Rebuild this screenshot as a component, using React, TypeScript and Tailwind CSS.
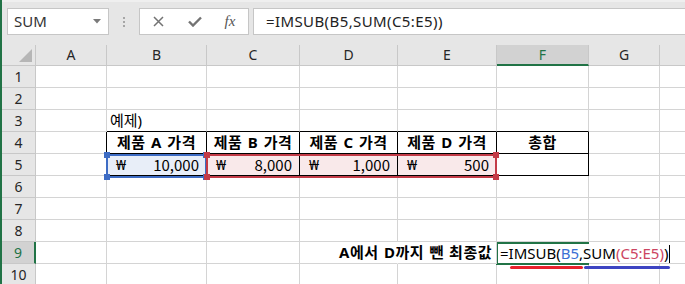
import React from "react";

const COLS = ["A", "B", "C", "D", "E", "F", "G", ""];
const ROWS = [1, 2, 3, 4, 5, 6, 7, 8, 9, 10];

const blackRight = new Set(["A4", "A5", "B4", "C4", "D4", "E4", "F4", "B5", "C5", "D5", "E5", "F5"]);
const blackBottom = new Set(["B3", "C3", "D3", "E3", "F3", "B4", "C4", "D4", "E4", "F4", "B5", "C5", "D5", "E5", "F5"]);

const headers: Record<string, string> = {
  B4: "제품 A 가격",
  C4: "제품 B 가격",
  D4: "제품 C 가격",
  E4: "제품 D 가격",
  F4: "총합",
};

const prices: Record<string, string> = {
  B5: "10,000",
  C5: "8,000",
  D5: "1,000",
  E5: "500",
};

function CellBody({ id }: { id: string }) {
  if (id === "B3") return <span className="pl-[3px]">예제)</span>;
  if (headers[id])
    return (
      <span className="w-full text-center font-bold tracking-[0.5px] [word-spacing:1px]">
        {headers[id]}
      </span>
    );
  if (prices[id])
    return (
      <span className="w-full flex justify-between pl-[9px] pr-[7px]">
        <span>₩</span>
        <span className="font-['Noto_Sans_CJK_KR',sans-serif]">{prices[id]}</span>
      </span>
    );
  if (id === "E9")
    return (
      <span className="w-full flex justify-end pr-[4px] font-bold tracking-[0.5px] [word-spacing:1px]">
        <span className="shrink-0">A에서 D까지 뺀 최종값</span>
      </span>
    );
  return null;
}

function Cell({ col, row }: { col: string; row: number }) {
  const id = `${col}${row}`;
  const r = blackRight.has(id)
    ? "border-r-black"
    : id === "D9"
    ? "border-r-white"
    : "border-r-[#d4d4d4]";
  const b = blackBottom.has(id) ? "border-b-black" : "border-b-[#d4d4d4]";
  const bg = id === "B5" ? "bg-[#e8eef8]" : prices[id] ? "bg-[#f9e9ea]" : "bg-white";
  const z = id === "E9" ? "relative z-10 bg-transparent" : "";
  return (
    <div className={`border-r border-b ${r} ${b} ${bg} ${z} flex items-center whitespace-nowrap text-[15px] leading-none text-black`}>
      <CellBody id={id} />
    </div>
  );
}

function Handles({ color }: { color: string }) {
  return (
    <>
      <span className={`absolute -left-[4px] -top-[4px] w-[6px] h-[6px] ${color}`} />
      <span className={`absolute -right-[4px] -top-[4px] w-[6px] h-[6px] ${color}`} />
      <span className={`absolute -left-[4px] -bottom-[4px] w-[6px] h-[6px] ${color}`} />
      <span className={`absolute -right-[4px] -bottom-[4px] w-[6px] h-[6px] ${color}`} />
    </>
  );
}

function Toolbar() {
  return (
    <div className="h-[45px] flex items-start pt-[8px] pl-[5px] border-t-2 border-t-[#efefef]">
      <div className="w-[102px] h-[27px] mt-[-2px] bg-white border border-[#c6c6c6] flex items-center justify-between pl-[6px] pr-[7px]">
        <span className="text-[15px] leading-none text-[#333]">SUM</span>
        <svg width="8" height="5" viewBox="0 0 8 5">
          <path d="M0 0 H8 L4 4.5 Z" fill="#7a7a7a" />
        </svg>
      </div>
      <div className="w-[30px] h-[27px] mt-[-2px] flex flex-col items-center justify-center gap-[2px]">
        <span className="w-[2px] h-[2px] bg-[#a6a6a6]" />
        <span className="w-[2px] h-[2px] bg-[#a6a6a6]" />
        <span className="w-[2px] h-[2px] bg-[#a6a6a6]" />
      </div>
      <div className="w-[110px] h-[27px] mt-[-2px] bg-white border border-[#c6c6c6] flex items-center">
        <div className="w-[37px] flex justify-center">
          <svg width="11" height="11" viewBox="0 0 11 11">
            <path d="M1 1 L10 10 M10 1 L1 10" stroke="#737373" strokeWidth="1.5" />
          </svg>
        </div>
        <div className="w-[35px] flex justify-center">
          <svg width="14" height="11" viewBox="0 0 14 11">
            <path d="M1 5.5 L5 9.5 L13 1.5" stroke="#737373" strokeWidth="2.4" fill="none" />
          </svg>
        </div>
        <div className="w-[36px] flex justify-center">
          <span className="font-['Liberation_Serif',serif] italic text-[15px] leading-none text-[#555]">fx</span>
        </div>
      </div>
      <div className="flex-1 ml-[4px] h-[27px] mt-[-2px] bg-white border border-[#c6c6c6] border-r-0 flex items-center pl-[12px]">
        <span className="text-[15px] leading-none tracking-[0.4px] text-[#222]">=IMSUB(B5,SUM(C5:E5))</span>
      </div>
    </div>
  );
}

export default function App() {
  return (
    <div className="w-[685px] h-[284px] overflow-hidden bg-[#e6e6e6] border-l-2 border-l-[#217346] font-['Noto_Sans','Noto_Sans_CJK_KR',sans-serif]">
      <Toolbar />
      <div className="relative grid grid-cols-[34px_71px_100px_93px_98px_99px_92px_71px_60px] grid-rows-[21px_repeat(10,22px)] w-max">
        <div className="border-r border-b border-[#c8c8c8] bg-[#e6e6e6] flex items-end justify-end pr-[3px] pb-[3px]">
          <svg width="13" height="13" viewBox="0 0 13 13">
            <path d="M13 0 V13 H0 Z" fill="#b6b6b6" />
          </svg>
        </div>
        {COLS.map((c) =>
          c === "F" ? (
            <div key={c} className="border-r border-r-[#c8c8c8] border-b-2 border-b-[#217346] bg-[#d2d2d2] flex items-center justify-center text-[14px] leading-none text-[#217346]">
              {c}
            </div>
          ) : (
            <div key={c} className="border-r border-b border-[#c8c8c8] bg-[#e6e6e6] flex items-center justify-center text-[14px] leading-none text-[#262626]">
              {c}
            </div>
          )
        )}
        {ROWS.map((r) => (
          <React.Fragment key={r}>
            {r === 9 ? (
              <div className="border-r-2 border-r-[#217346] border-b border-b-[#c8c8c8] bg-[#d2d2d2] flex items-center justify-center text-[14px] leading-none text-[#217346]">
                {r}
              </div>
            ) : (
              <div className="border-r border-b border-[#c8c8c8] bg-[#e6e6e6] flex items-center justify-center text-[14px] leading-none text-[#262626]">
                {r}
              </div>
            )}
            {COLS.map((c) => (
              <Cell key={c} col={c || "H"} row={r} />
            ))}
          </React.Fragment>
        ))}

        {/* range highlights */}
        <div className="absolute left-[104px] top-[109px] w-[101px] h-[24px] border-2 border-[#3d6cc4] pointer-events-none">
          <Handles color="bg-[#3d6cc4]" />
        </div>
        <div className="absolute left-[204px] top-[109px] w-[291px] h-[24px] border-2 border-[#c33b47] pointer-events-none">
          <Handles color="bg-[#c33b47]" />
        </div>

        {/* active cell in edit mode */}
        <div className="absolute left-[494px] top-[197px] w-[93px] h-[23px] border-2 border-r-0 border-[#217346]" />
        <div className="absolute left-[496px] top-[199px] h-[19px] bg-white flex items-center pl-[2px] pr-[3px] text-[15px] leading-none text-black whitespace-nowrap">
          <span>=</span>
          <span className="relative">
            IMSUB(<span className="text-[#3b6fd4]">B5</span>,
            <span className="absolute left-[1px] right-0 top-[20px] h-[3px] rounded-full bg-[#e8222c]" />
          </span>
          <span className="relative">
            SUM<span className="text-[#cc4562]">(C5:E5)</span>)
            <span className="absolute left-[1px] -right-[2px] top-[20px] h-[3px] rounded-full bg-[#3d44c2]" />
          </span>
          <span className="w-px h-[18px] bg-black ml-[1px]" />
        </div>
      </div>
    </div>
  );
}
